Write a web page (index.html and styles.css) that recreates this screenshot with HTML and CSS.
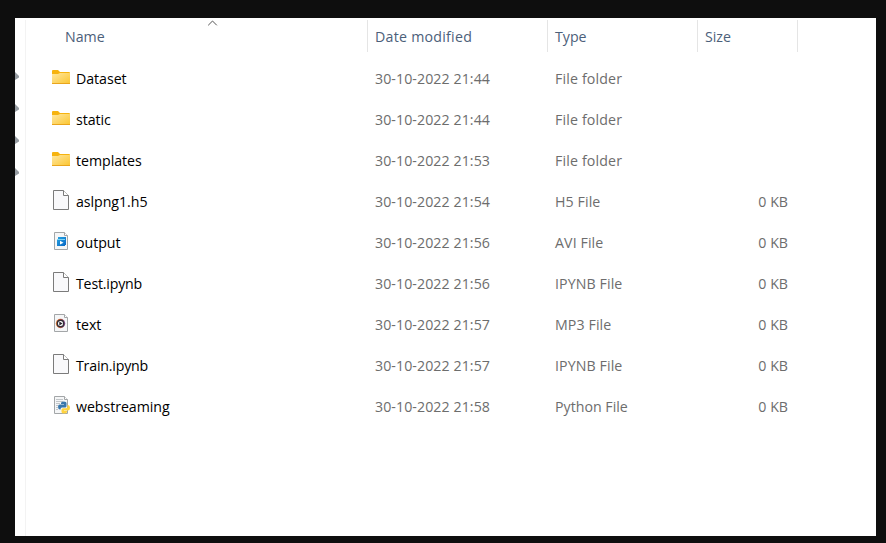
FILE: index.html
```
<!DOCTYPE html>
<html lang="en">
<head>
<meta charset="utf-8">
<title>Files</title>
<link rel="stylesheet" href="styles.css">
</head>
<body>
<svg class="defs" aria-hidden="true">
  <defs>
    <linearGradient id="gold" x1="0" y1="0" x2="1" y2="1"><stop offset="0" stop-color="#ffe7a0"/><stop offset="1" stop-color="#fbc52f"/></linearGradient>
    <linearGradient id="blue" x1="0" y1="0" x2="1" y2="1"><stop offset="0" stop-color="#27a5e2"/><stop offset="1" stop-color="#0866c4"/></linearGradient>
    <linearGradient id="ring" x1="0" y1="0" x2="1" y2="0"><stop offset="0" stop-color="#f58a35"/><stop offset=".5" stop-color="#e0603c"/><stop offset="1" stop-color="#7b4a9a"/></linearGradient>
    <symbol id="folder" viewBox="0 0 20 20">
      <path d="M1 4q0-1 1-1h5l2 2h9q1 0 1 1v3H1z" fill="#f6b30f"/>
      <path d="M1 7h6l2-1h10v11H1z" fill="url(#gold)"/>
      <path d="M1 16.5h18" stroke="#e9a51c"/>
    </symbol>
    <symbol id="blank" viewBox="0 0 20 20">
      <path d="M2.5.5h10l5 5v14h-15z" fill="#f9f9fb" stroke="#7b7b7b"/>
      <path d="M12.5.5v5h5" fill="#fff" stroke="#7b7b7b"/>
    </symbol>
    <symbol id="page" viewBox="0 0 20 20">
      <path d="M3.500 1.500h10l3 3v14h-13z" fill="#f5f6f7" stroke="#a3a6a8"/>
      <path d="M13.500 1.500v3h3" fill="#fff" stroke="#a3a6a8"/>
    </symbol>
    <symbol id="video" viewBox="0 0 20 20">
      <use href="#page"/>
      <path d="M7 6h8v8h-1v1H6V8h1z" fill="url(#blue)"/>
      <path d="M6 8h8v1H6z" fill="#7fd6f7"/>
      <path d="M9 9.800l3.500 1.900L9 13.600z" fill="#fff"/>
    </symbol>
    <symbol id="audio" viewBox="0 0 20 20">
      <use href="#page"/>
      <circle cx="9.500" cy="10.500" r="4.700" fill="url(#ring)"/>
      <circle cx="9.500" cy="10.500" r="3.200" fill="#fff" stroke="#343039" stroke-width="1.400"/>
      <path d="M8.300 8.600l3.300 1.900-3.300 1.900z" fill="#26242d"/>
    </symbol>
    <symbol id="python" viewBox="0 0 20 20">
      <use href="#page"/>
      <path d="M5 4.500h7M5 6.500h7M5 8.500h4M5 10.500h2M5 12.500h2M5 14.500h2" stroke="#c2c6c9"/>
      <path d="M10 9V8q0-1.500 2.800-1.500T15.500 8v3q0 1.500-1.500 1.500h-3q-1.500 0-1.500 2H9q-2 0-2-2.700T9.500 9.500H13V9z" fill="#3977ac"/>
      <path d="M16.500 10h.5q2 0 2 2.700t-2 2.800h-4v.500h3v1q0 1.500-2.800 1.500T10.500 17v-2.200q0-1.500 1.500-1.500h3q1.500 0 1.500-1.600z" fill="#ffd33f"/>
    </symbol>
  </defs>
</svg>
<main class="window">
  <aside class="nav"><i class="pin"></i><i class="pin"></i><i class="pin"></i><i class="pin"></i></aside>
  <section class="files">
    <header class="row head">
      <span>Name<svg class="sort" viewBox="0 0 10 6"><path d="M.7 5.300L5 1l4.300 4.300" fill="none" stroke="#555" stroke-width="1"/></svg></span><span class="modified">Date modified</span><span>Type</span><span>Size</span>
    </header>
    <div class="row"><span class="name"><svg><use href="#folder"/></svg>Dataset</span><span class="date">30-10-2022 21:44</span><span class="folder">File folder</span><span></span></div>
    <div class="row"><span class="name"><svg><use href="#folder"/></svg>static</span><span class="date">30-10-2022 21:44</span><span class="folder">File folder</span><span></span></div>
    <div class="row"><span class="name"><svg><use href="#folder"/></svg>templates</span><span class="date">30-10-2022 21:53</span><span class="folder">File folder</span><span></span></div>
    <div class="row"><span class="name"><svg><use href="#blank"/></svg>aslpng1.h5</span><span class="date">30-10-2022 21:54</span><span class="type">H5 File</span><span class="size">0 KB</span></div>
    <div class="row"><span class="name"><svg><use href="#video"/></svg>output</span><span class="date">30-10-2022 21:56</span><span class="type">AVI File</span><span class="size">0 KB</span></div>
    <div class="row"><span class="name notebook"><svg><use href="#blank"/></svg>Test.ipynb</span><span class="date">30-10-2022 21:56</span><span class="type">IPYNB File</span><span class="size">0 KB</span></div>
    <div class="row"><span class="name"><svg><use href="#audio"/></svg>text</span><span class="date">30-10-2022 21:57</span><span class="type">MP3 File</span><span class="size">0 KB</span></div>
    <div class="row"><span class="name notebook"><svg><use href="#blank"/></svg>Train.ipynb</span><span class="date">30-10-2022 21:57</span><span class="type">IPYNB File</span><span class="size">0 KB</span></div>
    <div class="row"><span class="name"><svg><use href="#python"/></svg>webstreaming</span><span class="date">30-10-2022 21:58</span><span>Python File</span><span class="size">0 KB</span></div>
  </section>
</main>
</body>
</html>
```
FILE: styles.css
```
* { box-sizing: border-box; }
body {
  margin: 0;
  height: 543px;
  padding: 18px 10px 7px 15px;
  background: #0e0e0e;
  overflow: hidden;
  font: 14.2px/20px "Open Sans", "Noto Sans", sans-serif;
}
.defs { position: absolute; width: 0; height: 0; }
.window { display: flex; height: 518px; background: #fff; }
.nav {
  width: 11px;
  margin-top: 2px;
  padding-top: 52px;
  border-right: 1px solid #f3f3f3;
}
.pin {
  display: block;
  width: 4px;
  height: 8px;
  margin-bottom: 24px;
  background: #969ca2;
  clip-path: polygon(0 0, 100% 50%, 100% 70%, 0 100%);
}
.files { flex: 1; padding-top: 2px; }
.row {
  display: grid;
  grid-template-columns: 342px 180px 150px 100px;
  align-items: center;
  height: 41px;
  color: #6d6d6d;
}
.row > span { padding-left: 7px; white-space: nowrap; }
.head { height: 32px; margin-bottom: 6px; color: #4c607a; }
.head > span {
  position: relative;
  height: 32px;
  line-height: 34px;
  border-right: 1px solid #e5e5e5;
}
.head > span:first-child { padding-left: 39px; }
.head > .modified { letter-spacing: .25px; }
.sort { position: absolute; left: 181px; top: 0; width: 11px; height: 6px; }
.row > .name { display: flex; align-items: center; padding-left: 25px; color: #000; letter-spacing: -.05px; }
.row > .notebook { letter-spacing: -.2px; }
.row > .date { letter-spacing: .07px; }
.row > .folder { letter-spacing: .15px; }
.row > .type { letter-spacing: .1px; }
.name svg { width: 20px; height: 20px; margin: -3px 5px 0 0; }
.row > .size { padding: 0 10px 0 0; text-align: right; }
```
